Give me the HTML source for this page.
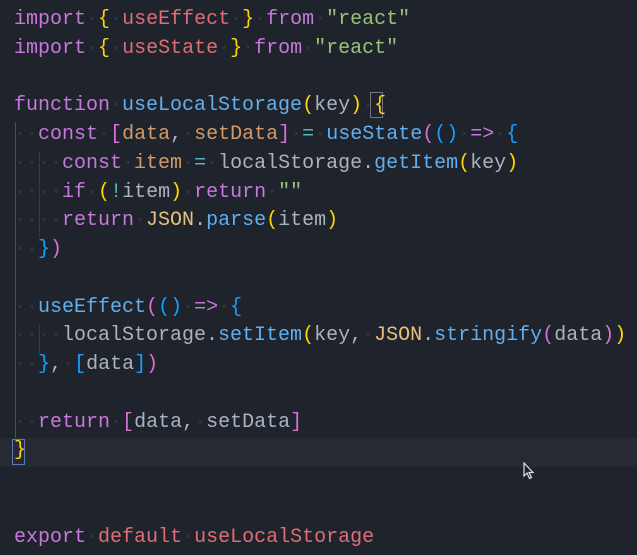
<!DOCTYPE html>
<html><head><meta charset="utf-8"><style>
html,body{margin:0;padding:0;background:#1f232b;width:637px;height:555px;overflow:hidden}
.c{position:absolute;left:14px;top:6px;font-family:"Liberation Mono",monospace;font-size:20px;line-height:28.75px;color:#abb2bf}
.l{height:28.75px;white-space:pre}
.k{color:#c678dd}.r{color:#e06c75}.y{color:#ffd700}.p{color:#da70d6}.b{color:#179fff}.f{color:#61afef}.o{color:#d19a66}.g{color:#98c379}.t{color:#56b6c2}.d{color:#323640}.j{color:#e5c07b}
.hl{position:absolute;left:0;top:438px;width:637px;height:29px;background:#262a33}
.gd{position:absolute;width:1px;background:#4b505a}
.box{position:absolute;border:1px solid #707784;width:11px;height:24px}
</style></head><body>
<div class="hl"></div>
<div class="gd" style="left:15px;top:122px;height:316px"></div>
<div class="gd" style="left:39px;top:151px;height:86px;background:#373b44"></div>
<div class="gd" style="left:39px;top:324px;height:29px;background:#373b44"></div>
<div class="box" style="left:370px;top:92px"></div>
<div class="box" style="left:12px;top:439px;border-color:#5a7ab0"></div>
<div class="c"><div class="l"><span class="k">import</span><span class="d">·</span><span class="y">{</span><span class="d">·</span><span class="r">useEffect</span><span class="d">·</span><span class="y">}</span><span class="d">·</span><span class="k">from</span><span class="d">·</span><span class="g">"react"</span></div><div class="l"><span class="k">import</span><span class="d">·</span><span class="y">{</span><span class="d">·</span><span class="r">useState</span><span class="d">·</span><span class="y">}</span><span class="d">·</span><span class="k">from</span><span class="d">·</span><span class="g">"react"</span></div><div class="l"> </div><div class="l"><span class="k">function</span><span class="d">·</span><span class="f">useLocalStorage</span><span class="y">(</span>key<span class="y">)</span><span class="d">·</span><span class="y">{</span></div><div class="l"><span class="d">··</span><span class="k">const</span><span class="d">·</span><span class="p">[</span><span class="o">data</span>,<span class="d">·</span><span class="o">setData</span><span class="p">]</span><span class="d">·</span><span class="t">=</span><span class="d">·</span><span class="f">useState</span><span class="p">(</span><span class="b">()</span><span class="d">·</span><span class="k">=&gt;</span><span class="d">·</span><span class="b">{</span></div><div class="l"><span class="d">····</span><span class="k">const</span><span class="d">·</span><span class="o">item</span><span class="d">·</span><span class="t">=</span><span class="d">·</span>localStorage.<span class="f">getItem</span><span class="y">(</span>key<span class="y">)</span></div><div class="l"><span class="d">····</span><span class="k">if</span><span class="d">·</span><span class="y">(</span><span class="t">!</span>item<span class="y">)</span><span class="d">·</span><span class="k">return</span><span class="d">·</span><span class="g">""</span></div><div class="l"><span class="d">····</span><span class="k">return</span><span class="d">·</span><span class="j">JSON</span>.<span class="f">parse</span><span class="y">(</span>item<span class="y">)</span></div><div class="l"><span class="d">··</span><span class="b">}</span><span class="p">)</span></div><div class="l"> </div><div class="l"><span class="d">··</span><span class="f">useEffect</span><span class="p">(</span><span class="b">()</span><span class="d">·</span><span class="k">=&gt;</span><span class="d">·</span><span class="b">{</span></div><div class="l"><span class="d">····</span>localStorage.<span class="f">setItem</span><span class="y">(</span>key,<span class="d">·</span><span class="j">JSON</span>.<span class="f">stringify</span><span class="p">(</span>data<span class="p">)</span><span class="y">)</span></div><div class="l"><span class="d">··</span><span class="b">}</span>,<span class="d">·</span><span class="b">[</span>data<span class="b">]</span><span class="p">)</span></div><div class="l"> </div><div class="l"><span class="d">··</span><span class="k">return</span><span class="d">·</span><span class="p">[</span>data,<span class="d">·</span>setData<span class="p">]</span></div><div class="l"><span class="y">}</span></div><div class="l"> </div><div class="l"> </div><div class="l"><span class="k">export</span><span class="d">·</span><span class="r">default</span><span class="d">·</span><span class="r">useLocalStorage</span></div></div>
<svg style="position:absolute;left:523px;top:462px" width="12" height="18" viewBox="0 0 12 18"><path d="M1 1 L1 14 L4 11 L6.5 16.5 L8.5 15.5 L6 10.5 L10 10.5 Z" fill="#1f232b" stroke="#e0e0e0" stroke-width="1.2"/></svg>
</body></html>
